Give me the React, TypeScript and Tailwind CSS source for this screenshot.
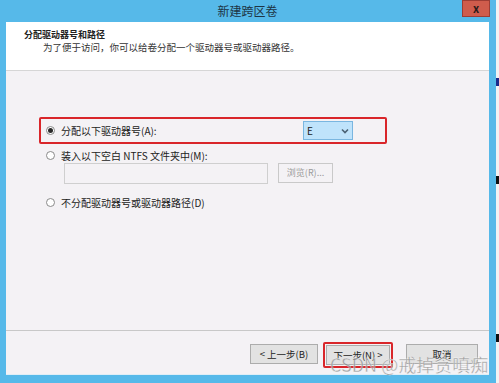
import React from "react";

const font = { fontFamily: '"Noto Sans CJK SC", "Noto Sans", sans-serif' };

function Radio({ checked }: { checked?: boolean }) {
  return (
    <span className="w-[9px] h-[9px] rounded-full border border-[#8a8a8a] bg-white flex items-center justify-center shrink-0">
      {checked && <span className="w-[5px] h-[5px] rounded-full bg-[#2a2a2a]" />}
    </span>
  );
}

export default function App() {
  return (
    <div className="w-[499px] h-[383px] flex bg-white relative overflow-hidden" style={font}>
      <div className="w-[496px] h-full flex flex-col bg-[#56b9e9] border-l-[6px] border-r-[7px] border-b-[8px] border-[#56b9e9] shrink-0">
        {/* title bar */}
        <div className="h-[22px] relative flex items-center justify-center shrink-0">
          <span className="text-[12px] text-[#1d3545] leading-none">新建跨区卷</span>
          <div className="absolute right-[-1px] top-0 w-[28px] h-[17px] bg-[#cf5c4c] border border-[#9c3d35] flex items-center justify-center">
            <span className="text-[11px] font-bold text-[#2b1b1a] leading-none">x</span>
          </div>
        </div>
        <div className="flex-1 flex flex-col bg-[#f4f2f5] border-b border-[#dfeef6]">
          {/* header */}
          <div className="h-[49px] bg-white border-b border-[#d6d6d6] pl-[18px] pt-[6px] shrink-0">
            <div className="text-[9px] font-bold text-[#222] leading-[13px]">分配驱动器号和路径</div>
            <div className="text-[9.5px] text-[#333] leading-[13px] pl-[19px]">为了便于访问，你可以给卷分配一个驱动器号或驱动器路径。</div>
          </div>
          {/* content */}
          <div className="flex-1 pt-[46px] pl-[33px] flex flex-col">
            <div className="w-[348px] h-[27px] border-2 border-[#d9262a] rounded-[2px] flex items-center pl-[5px]">
              <Radio checked />
              <span className="ml-[6px] text-[10px] text-[#222]">分配以下驱动器号(A):</span>
              <div className="ml-auto mr-[32px] w-[50px] h-[19px] bg-[#bfe3fb] border border-[#7ab6e0] flex items-center justify-between px-[3px]">
                <span className="text-[10px] text-[#222]">E</span>
                <svg width="8" height="6" viewBox="0 0 8 6"><path d="M1 1.5 L4 4.5 L7 1.5" stroke="#4b6275" strokeWidth="1.6" fill="none" /></svg>
              </div>
            </div>
            <div className="flex items-center pl-[7px] mt-[4px] h-[14px]">
              <Radio />
              <span className="ml-[6px] text-[10px] text-[#222]">装入以下空白 NTFS 文件夹中(M):</span>
            </div>
            <div className="flex items-start pl-[25px] mt-[1px]">
              <div className="w-[204px] h-[21px] border border-[#cfcfcf] bg-[#f4f2f5]" />
              <div className="ml-[10px] w-[55px] h-[20px] border border-[#c9c9c9] bg-[#f4f2f5] flex items-center justify-center">
                <span className="text-[9px] text-[#9a9a9a]">浏览(R)...</span>
              </div>
            </div>
            <div className="flex items-center pl-[7px] mt-[11px] h-[14px]">
              <Radio />
              <span className="ml-[6px] text-[10px] text-[#222]">不分配驱动器号或驱动器路径(D)</span>
            </div>
          </div>
          {/* footer */}
          <div className="h-[44px] border-t border-[#c8c8c8] flex items-start justify-end pt-[13px] pr-[11px] shrink-0 relative">
            <div className="w-[68px] h-[20px] bg-[#e2e2e2] border border-[#acacac] flex items-center justify-center">
              <span className="text-[9.5px] text-[#222]">&lt; 上一步(B)</span>
            </div>
            <div className="ml-[5px] -mt-[2px] p-[1px] border-2 border-[#d9262a] rounded-[2px]">
              <div className="w-[64px] h-[20px] bg-[#e2e2e2] border border-[#acacac] flex items-center justify-center">
                <span className="text-[9.5px] text-[#222]">下一步(N) &gt;</span>
              </div>
            </div>
            <div className="ml-[13px] w-[72px] h-[20px] bg-[#e2e2e2] border border-[#acacac] flex items-center justify-center">
              <span className="text-[9.5px] text-[#222]">取消</span>
            </div>
          </div>
        </div>
      </div>
      {/* background outside window */}
      <div className="flex-1 flex flex-col bg-[#f2f2f2]">
        <div className="h-[78px]" />
        <div className="h-[8px] bg-[#1c2a8a]" />
        <div className="h-[90px]" />
        <div className="h-[8px] bg-[#111]" />
        <div className="h-[150px]" />
        <div className="h-[8px] bg-[#111]" />
      </div>
      {/* watermark */}
      <div
        className="absolute left-[330px] top-[355px] text-[18px] leading-none text-[#8d8d8d] opacity-80"
        style={{ fontFamily: '"Noto Sans CJK SC", sans-serif', WebkitTextStroke: "0.3px #ffffff" }}
      >
        CSDN @戒掉贪嗔痴
      </div>
    </div>
  );
}
